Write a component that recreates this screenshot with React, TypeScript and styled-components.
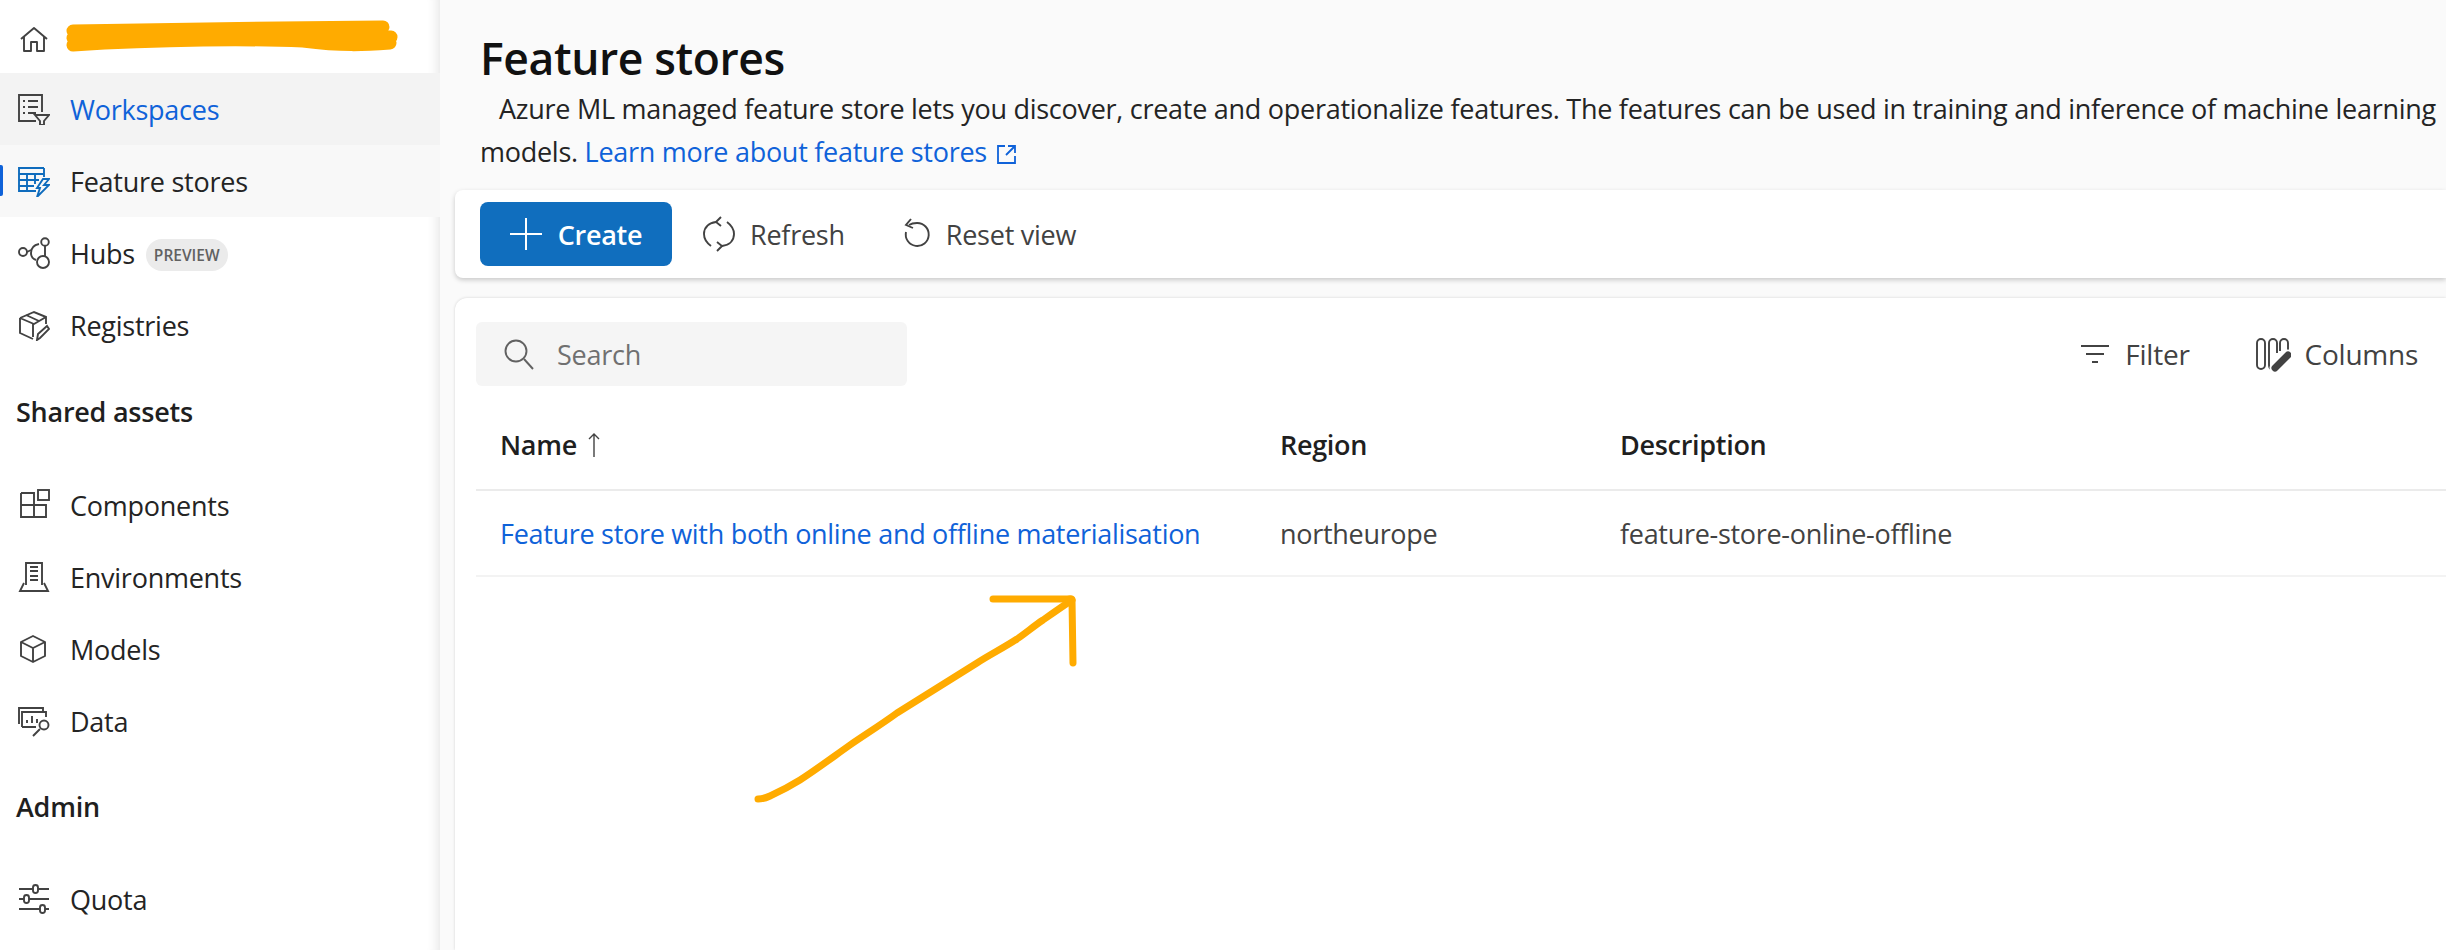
import React from "react";
import styled, { createGlobalStyle } from "styled-components";

const GlobalStyle = createGlobalStyle`
  html, body {
    margin: 0;
    padding: 0;
    height: 100%;
    background: #ffffff;
    font-family: "Open Sans", "Noto Sans", sans-serif;
    overflow: hidden;
  }
  #root { height: 100%; }
  * { box-sizing: border-box; }
`;

const Page = styled.div`
  position: relative;
  display: flex;
  width: 100%;
  height: 950px;
  overflow: hidden;
`;

const Sidebar = styled.nav`
  width: 440px;
  flex-shrink: 0;
  padding-top: 1px;
  background: #ffffff;
  box-shadow: inset -14px 0 14px -14px rgba(0, 0, 0, 0.14);
`;

const NavItem = styled.div<{ $hovered?: boolean; $selected?: boolean }>`
  position: relative;
  display: flex;
  align-items: center;
  height: 72px;
  padding-left: 18px;
  gap: 20px;
  font-size: 27px;
  letter-spacing: -0.25px;
  color: #242424;
  background: ${({ $hovered, $selected }) =>
    $hovered ? "#f3f3f3" : $selected ? "#f8f8f8" : "transparent"};
  font-weight: ${({ $selected }) => ($selected ? 500 : 400)};
`;

const NavLabel = styled.span<{ $link?: boolean }>`
  color: ${({ $link }) => ($link ? "#0f62d9" : "inherit")};
`;

const SelectedBar = styled.span`
  position: absolute;
  left: 0;
  top: 20px;
  width: 3px;
  height: 31px;
  border-radius: 0 2px 2px 0;
  background: #0f62d9;
`;

const Badge = styled.span`
  display: inline-flex;
  align-items: center;
  height: 32px;
  padding: 0 8px;
  margin: 4px 0 0 -9px;
  border-radius: 16px;
  background: #ebebeb;
  color: #616161;
  font-size: 15.5px;
  font-weight: 600;
  letter-spacing: 0;
`;

const SectionHeading = styled.h2<{ $extra?: boolean }>`
  margin: 0;
  padding: ${({ $extra }) => ($extra ? "21px 0 27px 16px" : "20px 0 26px 16px")};
  font-size: 27px;
  line-height: 60px;
  font-weight: 600;
  letter-spacing: -0.25px;
  color: #1f1f1f;
`;

const Scribble = styled.svg`
  position: absolute;
  left: 60px;
  top: 14px;
`;

const Main = styled.main`
  flex: 1;
  min-width: 0;
  display: flex;
  flex-direction: column;
  padding-left: 15px;
  background: #fafafa;
`;

const Header = styled.header`
  padding: 28px 0 17px 25px;
`;

const Title = styled.h1`
  margin: 0;
  font-size: 44.5px;
  line-height: 59px;
  font-weight: 600;
  letter-spacing: -0.4px;
  color: #111111;
`;

const IntroLine = styled.p<{ $indent?: boolean }>`
  margin: 0;
  font-size: 27px;
  line-height: 43px;
  letter-spacing: -0.27px;
  white-space: nowrap;
  padding-left: ${({ $indent }) => ($indent ? "19px" : "0")};
  color: #242424;
`;

const LearnLink = styled.a`
  color: #0f62d9;
  text-decoration: none;
`;

const ExternalIcon = styled.svg`
  display: inline-block;
  margin-left: 10px;
  vertical-align: -2px;
`;

const Toolbar = styled.div`
  display: flex;
  align-items: center;
  height: 88px;
  padding-left: 25px;
  background: #ffffff;
  border-radius: 8px 0 0 8px;
  box-shadow: 0 2px 5px rgba(0, 0, 0, 0.2);
`;

const PrimaryButton = styled.button`
  display: flex;
  align-items: center;
  justify-content: center;
  gap: 16px;
  width: 192px;
  height: 64px;
  border: 0;
  border-radius: 8px;
  background: #106ebe;
  color: #ffffff;
  font: 600 27px "Open Sans", sans-serif;
  letter-spacing: -0.25px;
`;

const ToolbarButton = styled.button<{ $first?: boolean }>`
  display: flex;
  align-items: center;
  gap: 13px;
  padding: 0;
  margin-left: ${({ $first }) => ($first ? "29px" : "56px")};
  border: 0;
  background: none;
  color: #424242;
  font: 500 27px "Open Sans", sans-serif;
  letter-spacing: -0.25px;
`;

const Panel = styled.section`
  flex: 1;
  margin-top: 20px;
  padding: 24px 0 0 21px;
  background: #ffffff;
  border-radius: 12px 0 0 0;
  box-shadow: 0 0 3px rgba(0, 0, 0, 0.16);
`;

const Controls = styled.div`
  display: flex;
  align-items: center;
  justify-content: space-between;
  padding-right: 28px;
`;

const SearchBox = styled.div`
  display: flex;
  align-items: center;
  gap: 22px;
  width: 431px;
  height: 64px;
  padding-left: 27px;
  border-radius: 6px;
  background: #f5f5f5;
  color: #707070;
  font-size: 27px;
  letter-spacing: -0.25px;
`;

const ControlGroup = styled.div`
  display: flex;
  align-items: center;
  gap: 65px;
`;

const ControlButton = styled.span`
  display: flex;
  align-items: center;
  gap: 14px;
  color: #424242;
  font-size: 28px;
  font-weight: 500;
  letter-spacing: -0.25px;
`;

const TableRow = styled.div<{ $head?: boolean }>`
  display: grid;
  grid-template-columns: 780px 340px 1fr;
  align-items: center;
  height: ${({ $head }) => ($head ? "105px" : "86px")};
  padding-top: ${({ $head }) => ($head ? "14px" : "1px")};
  border-bottom: 2px solid ${({ $head }) => ($head ? "#ebebeb" : "#f3f3f3")};
  font-size: 27px;
  letter-spacing: -0.3px;
  font-weight: ${({ $head }) => ($head ? 600 : 400)};
  color: ${({ $head }) => ($head ? "#1f1f1f" : "#424242")};
`;

const Cell = styled.div`
  display: flex;
  align-items: center;
  gap: 10px;
  padding-left: 24px;
`;

const RowLink = styled.a`
  color: #0f62d9;
  text-decoration: none;
  white-space: nowrap;
`;

const ArrowMark = styled.svg`
  position: absolute;
  left: 0;
  top: 0;
  pointer-events: none;
`;

const Icon = ({ children, color = "#424242", size = 32, width = 1.9 }: { children: React.ReactNode; color?: string; size?: number; width?: number }) => (
  <svg width={size} height={size} viewBox={`0 0 ${size} ${size}`} fill="none" stroke={color} strokeWidth={width} style={{ flexShrink: 0 }}>
    {children}
  </svg>
);

const icons: Record<string, React.ReactNode> = {
  home: (
    <Icon>
      <path d="M3 18 16 7l13 11M6 16v14h7v-9h6v9h7V16" strokeLinejoin="round" />
    </Icon>
  ),
  workspaces: (
    <Icon>
      <path d="M24 19V2H1v26h17" />
      <path d="M5 8h2M10 8h10M5 14h2M10 14h10M5 20h2M10 20h8" />
      <path d="M17 22h14l-5 6v4h-4v-4z" />
    </Icon>
  ),
  stores: (
    <Icon color="#0f6cbd">
      <path d="M26 3H1v23h17M1 9h25M1 15h20M1 21h15M9 9v17M17 9v10M26 3v9" />
      <path d="M25 14h6l-5 6h5L19 32l3-9h-3z" />
    </Icon>
  ),
  hubs: (
    <Icon>
      <circle cx="5" cy="15" r="4" />
      <path d="M21 7c-5 1-8 4-8 9 0 3 2 6 5 7" />
      <circle cx="27" cy="5" r="3.800" />
      <circle cx="25" cy="25" r="6" />
      <path d="M9 15l4-2M27 9v10" />
    </Icon>
  ),
  registries: (
    <Icon>
      <path d="M2 9 16 3l12 5v7M2 9v15l13 6M2 9l14 6 12-7M15 15v13M8 6l13 6" />
      <path d="m19 31 1-6 9-8 2 3-9 9z" />
    </Icon>
  ),
  components: (
    <Icon>
      <path d="M3 4h13v24M3 4v24h25V16H3" />
      <rect x="20" y="1" width="11" height="10" />
    </Icon>
  ),
  environments: (
    <Icon>
      <path d="M8 24V2h16v22M12 10h8M12 15h8M12 19h8M12 6h8" />
      <path d="M6 22 2 30h28l-4-8M2 30h28" />
    </Icon>
  ),
  models: (
    <Icon>
      <path d="M15 3 27 9v14l-12 6-12-6V9z" strokeLinejoin="round" />
      <path d="M3 9l12 6 12-6M15 15v14" />
    </Icon>
  ),
  data: (
    <Icon>
      <path d="M1 19V3h24v3" />
      <path d="M4 22V7h24v5M4 22h14" />
      <path d="M9 18v-3M14 18v-7M19 18v-4" />
      <circle cx="26" cy="20" r="4.500" />
      <path d="m22 24-7 7" />
    </Icon>
  ),
  quota: (
    <Icon>
      <path d="M1 6h14M20 6h11M1 16h5M11 16h20M1 26h21M27 26h4" />
      <rect x="15" y="2" width="5" height="8" rx="2.500" />
      <rect x="6" y="12" width="5" height="8" rx="2.500" />
      <rect x="22" y="22" width="5" height="8" rx="2.500" />
    </Icon>
  ),
};

export default function App() {
  return (
    <>
      <GlobalStyle />
      <Page>
        <Sidebar>
          <NavItem>
            {icons.home}
            <Scribble width="340" height="44" viewBox="0 0 340 44" fill="none" stroke="#ffab00" strokeLinecap="round" strokeLinejoin="round" strokeWidth="13">
              <path d="M13 16C100 14 230 13 323 12M13 23c60-8 140 2 200-2s80 0 118 1M13 30c90-6 180-6 230-4 40 5 60 4 87 2" />
            </Scribble>
          </NavItem>
          <NavItem $hovered>
            {icons.workspaces}
            <NavLabel $link>Workspaces</NavLabel>
          </NavItem>
          <NavItem $selected>
            <SelectedBar />
            {icons.stores}
            <NavLabel>Feature stores</NavLabel>
          </NavItem>
          <NavItem>
            {icons.hubs}
            <NavLabel>Hubs</NavLabel>
            <Badge>PREVIEW</Badge>
          </NavItem>
          <NavItem>
            {icons.registries}
            <NavLabel>Registries</NavLabel>
          </NavItem>
          <SectionHeading $extra>Shared assets</SectionHeading>
          <NavItem>
            {icons.components}
            <NavLabel>Components</NavLabel>
          </NavItem>
          <NavItem>
            {icons.environments}
            <NavLabel>Environments</NavLabel>
          </NavItem>
          <NavItem>
            {icons.models}
            <NavLabel>Models</NavLabel>
          </NavItem>
          <NavItem>
            {icons.data}
            <NavLabel>Data</NavLabel>
          </NavItem>
          <SectionHeading>Admin</SectionHeading>
          <NavItem>
            {icons.quota}
            <NavLabel>Quota</NavLabel>
          </NavItem>
        </Sidebar>
        <Main>
          <Header>
            <Title>Feature stores</Title>
            <IntroLine $indent>
              Azure ML managed feature store lets you discover, create and operationalize features. The features can be used in training and inference of machine learning
            </IntroLine>
            <IntroLine>
              models.{" "}
              <LearnLink>
                Learn more about feature stores
                <ExternalIcon width="20" height="20" viewBox="0 0 20 20" fill="none" stroke="#0f62d9" strokeWidth="1.8">
                  <path d="M8 2H1v17h17v-7M11 2h7v7M18 2 9 11" />
                </ExternalIcon>
              </LearnLink>
            </IntroLine>
          </Header>
          <Toolbar>
            <PrimaryButton>
              <Icon color="#ffffff" width={2}>
                <path d="M16 0v32M0 16h32" />
              </Icon>
              Create
            </PrimaryButton>
            <ToolbarButton $first>
              <Icon size={36}>
                <path d="M15 6C7 7 3 12 3 18c0 5 3 9 7 12M21 30c8-1 12-6 12-12 0-5-3-9-7-12" />
                <path d="m20 1-5 5 5 4M16 26l5 4-5 5" />
              </Icon>
              Refresh
            </ToolbarButton>
            <ToolbarButton>
              <Icon>
                <path d="M8 7c3-2 6-2 8-2a11.500 11.500 0 1 1-11 9" />
                <path d="M10 1 5 7l7 3" />
              </Icon>
              Reset view
            </ToolbarButton>
          </Toolbar>
          <Panel>
            <Controls>
              <SearchBox>
                <Icon color="#616161">
                  <circle cx="13" cy="13" r="10.500" />
                  <path d="m21 21 9 10" />
                </Icon>
                Search
              </SearchBox>
              <ControlGroup>
                <ControlButton>
                  <Icon width={2.200}>
                    <path d="M2 8h28M7 16h18M13 24h6" />
                  </Icon>
                  Filter
                </ControlButton>
                <ControlButton>
                  <Icon size={36}>
                    <rect x="2" y="3" width="8" height="30" rx="4" />
                    <path d="M14 29V7a4 4 0 0 1 8 0v10M14 29c0 2 1 4 3 4M25 15V7a4 4 0 0 1 8 0v8" />
                    <path d="M20 32 33 19" stroke="#ffffff" strokeWidth="11" strokeLinecap="round" />
                    <path d="M20 32 33 19" strokeWidth="7" strokeLinecap="round" />
                  </Icon>
                  Columns
                </ControlButton>
              </ControlGroup>
            </Controls>
            <TableRow $head>
              <Cell>
                Name
                <svg width="14" height="26" viewBox="0 0 14 26" fill="none" stroke="#424242" strokeWidth="1.4">
                  <path d="M7 25V2M2 7l5-5 5 5" />
                </svg>
              </Cell>
              <Cell>Region</Cell>
              <Cell>Description</Cell>
            </TableRow>
            <TableRow>
              <Cell>
                <RowLink>Feature store with both online and offline materialisation</RowLink>
              </Cell>
              <Cell>northeurope</Cell>
              <Cell>feature-store-online-offline</Cell>
            </TableRow>
          </Panel>
        </Main>
        <ArrowMark width="2446" height="950" viewBox="0 0 2446 950" fill="none" stroke="#ffab00" strokeWidth="7" strokeLinecap="round" strokeLinejoin="round">
          <path d="M758 799c5 0 8-1 12-3 11-5 22-11 30-16 17-11 33-23 50-35 16-11 32-21 47-32 27-17 53-33 80-50 14-9 28-16 40-24 10-7 17-13 26-19 10-7 20-14 29-20" />
          <path d="M993 599h72c3 0 7-1 7 1l1 63" />
        </ArrowMark>
      </Page>
    </>
  );
}
